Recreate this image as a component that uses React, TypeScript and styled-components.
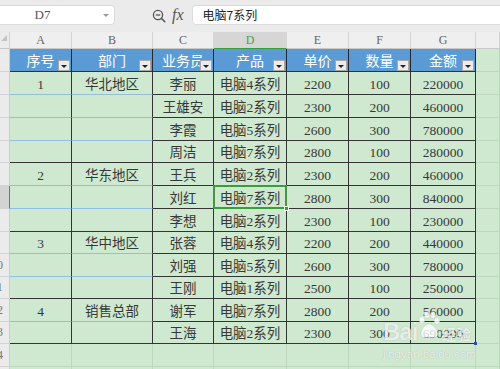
import React from "react";
import styled, { createGlobalStyle } from "styled-components";

const Global = createGlobalStyle`
  html, body { margin: 0; padding: 0; width: 500px; height: 369px; overflow: hidden; background: #cee9cf; }
  #root { width: 500px; height: 369px; overflow: hidden; }
`;

const GRID = "10px 62px 81px 61px 73px 62px 62px 65px 1fr";
const DARK = "#333333";
const LIGHT_BLUE = "#94bde3";
const LIGHT_GREEN = "#bcd8bc";
const GREEN_SEL = "#3c9b3c";
const CELL_BG = "#cee9cf";

const Page = styled.div`
  position: relative;
  width: 500px;
  height: 369px;
  overflow: hidden;
  background: ${CELL_BG};
  font-family: "Liberation Serif", "Noto Sans CJK SC", serif;
`;

const TopBar = styled.div`
  height: 32px;
  box-sizing: border-box;
  padding-top: 5px;
  background: #ebebeb;
  display: flex;
  align-items: flex-start;
`;

const NameBox = styled.div`
  position: relative;
  margin-left: -10px;
  width: 125px;
  height: 20px;
  box-sizing: border-box;
  padding-right: 20px;
  background: #fff;
  border: 1px solid #dcdcdc;
  border-radius: 4px;
  display: flex;
  align-items: center;
`;

const NameText = styled.span`
  flex: 1;
  text-align: center;
  font: 13px "Liberation Serif", serif;
  color: #555;
`;

const NameArrow = styled.span`
  position: absolute;
  right: 5px;
  top: 8px;
  border-left: 3px solid transparent;
  border-right: 3px solid transparent;
  border-top: 3px solid #999;
`;

const ZoomIcon = styled.svg`
  margin-left: 37px;
  margin-top: 4px;
  flex: none;
`;

const Fx = styled.span`
  margin-left: 6px;
  font: italic 16px "Liberation Serif", serif;
  line-height: 20px;
  color: #555;
`;

const FormulaBox = styled.div`
  flex: 1;
  margin-left: 8px;
  margin-right: -10px;
  height: 20px;
  box-sizing: border-box;
  padding-left: 10px;
  background: #fff;
  border: 1px solid #dcdcdc;
  border-radius: 4px;
  font: 12px "Noto Sans CJK SC", sans-serif;
  line-height: 18px;
  color: #222;
`;

const Row = styled.div<{ $h: number }>`
  display: grid;
  grid-template-columns: ${GRID};
  height: ${(p) => p.$h}px;
`;

const Corner = styled.div`
  position: relative;
  background: #ececec;
  border-right: 1px solid #d0d0d0;
  border-bottom: 1px solid #c8c8c8;
  overflow: hidden;
  &::after {
    content: "";
    position: absolute;
    left: 1px;
    top: 3px;
    border-left: 6px solid transparent;
    border-bottom: 6px solid #c4c4c4;
  }
`;

const ColHead = styled.div<{ $active?: boolean }>`
  box-sizing: border-box;
  background: ${(p) => (p.$active ? "#d6d6d6" : "#efefef")};
  border-right: 1px solid #d4d4d4;
  border-bottom: 1px solid ${(p) => (p.$active ? GREEN_SEL : "#c8c8c8")};
  color: ${(p) => (p.$active ? "#4ea04e" : "#666")};
  font: 12px "Liberation Serif", serif;
  display: flex;
  align-items: center;
  justify-content: center;
`;

const RowHead = styled.div<{ $sel?: boolean }>`
  box-sizing: border-box;
  background: ${(p) => (p.$sel ? "#d3d3d3" : "#ebebeb")};
  border-right: 1px solid ${(p) => (p.$sel ? GREEN_SEL : "#cccccc")};
  border-bottom: 1px solid #d2d2d2;
  display: flex;
  align-items: center;
  overflow: hidden;
`;

/* the row-number column is scrolled: only its right-most pixels are on screen */
const RowNum = styled.span`
  flex: none;
  width: 30px;
  margin-left: -18px;
  text-align: center;
  color: #777;
  font: 12px "Liberation Serif", serif;
  white-space: nowrap;
`;

const HeadCell = styled.div`
  position: relative;
  box-sizing: border-box;
  background: #5b9bd5;
  border-right: 1px solid #1f2a36;
  border-bottom: 1px solid ${DARK};
  color: #fff;
  font-size: 14px;
  line-height: 18px;
  display: flex;
  align-items: flex-end;
  justify-content: center;
  white-space: nowrap;
`;

const FilterBtn = styled.span`
  position: absolute;
  right: 1px;
  bottom: 0;
  width: 12px;
  height: 11px;
  box-sizing: border-box;
  background: #ececec;
  border: 1px solid #a8a8a8;
  z-index: 1;
  &::after {
    content: "";
    position: absolute;
    left: 2px;
    top: 4px;
    border-left: 3px solid transparent;
    border-right: 3px solid transparent;
    border-top: 3px solid #222;
  }
`;

const DataCell = styled.div<{ $bottom: "dark" | "light"; $active?: boolean }>`
  position: relative;
  box-sizing: border-box;
  background: ${CELL_BG};
  border-right: 1px solid ${DARK};
  border-bottom: 1px solid ${(p) => (p.$bottom === "dark" ? DARK : LIGHT_BLUE)};
  color: #383838;
  font-size: 13.5px;
  line-height: 18px;
  display: flex;
  align-items: flex-end;
  justify-content: center;
  white-space: nowrap;
  ${(p) =>
    p.$active
      ? `
    &::after {
      content: "";
      position: absolute;
      left: -1px; top: -1px; right: -1px; bottom: -1px;
      border: 2px solid ${GREEN_SEL};
      z-index: 2;
    }
    &::before {
      content: "";
      position: absolute;
      right: -3px; bottom: -3px;
      width: 5px; height: 5px;
      background: ${GREEN_SEL};
      border: 1px solid #fff;
      box-sizing: border-box;
      z-index: 3;
    }
  `
      : ""}
`;

const EmptyCell = styled.div`
  box-sizing: border-box;
  background: ${CELL_BG};
  border-right: 1px solid ${LIGHT_GREEN};
  border-bottom: 1px solid ${LIGHT_GREEN};
`;

const TableCorner = styled.span`
  position: absolute;
  left: 474px;
  top: 342px;
  width: 3px;
  height: 3px;
  background: #2f4f9f;
  z-index: 4;
`;

const Watermark = styled.div`
  position: absolute;
  left: 383px;
  top: 313px;
  z-index: 5;
  display: flex;
  flex-direction: column;
  align-items: flex-start;
  color: rgba(255, 255, 255, 0.78);
  text-shadow: 0 0 1px rgba(0, 0, 0, 0.25);
  pointer-events: none;
`;

const MarkLine = styled.div`
  display: flex;
  align-items: flex-end;
  height: 32px;
`;

const MarkBai = styled.span`
  font: bold 24px "Liberation Sans", sans-serif;
  line-height: 26px;
  letter-spacing: -1px;
`;

const MarkJy = styled.span`
  font: bold 15px "Noto Sans CJK SC", sans-serif;
  line-height: 22px;
  margin-left: 1px;
`;

const MarkUrl = styled.span`
  font: 11.5px "Liberation Sans", sans-serif;
  line-height: 14px;
  margin-top: 2px;
`;

const Paw = () => (
  <svg width="22" height="30" viewBox="0 0 22 30" style={{ marginLeft: 1, marginBottom: 4 }}>
    <g fill="rgba(255,255,255,0.8)" stroke="rgba(0,0,0,0.15)" strokeWidth="0.5">
      <ellipse cx="4" cy="9" rx="2.8" ry="3.4" />
      <ellipse cx="9" cy="4" rx="2.6" ry="3.2" />
      <ellipse cx="15" cy="4" rx="2.6" ry="3.2" />
      <ellipse cx="19" cy="10" rx="2.8" ry="3.2" />
      <path d="M11 13 C7 13 3 19 3 23 C3 27 7 27 11 26 C15 27 20 27 20 23 C20 19 15 13 11 13 Z" />
    </g>
  </svg>
);

type Rec = { no?: string; dept?: string; name: string; prod: string; price: string; qty: string; amt: string; end: boolean };

const data: Rec[] = [
  { no: "1", dept: "华北地区", name: "李丽", prod: "电脑4系列", price: "2200", qty: "100", amt: "220000", end: false },
  { name: "王雄安", prod: "电脑2系列", price: "2300", qty: "200", amt: "460000", end: false },
  { name: "李霞", prod: "电脑5系列", price: "2600", qty: "300", amt: "780000", end: false },
  { name: "周洁", prod: "电脑7系列", price: "2800", qty: "100", amt: "280000", end: true },
  { no: "2", dept: "华东地区", name: "王兵", prod: "电脑2系列", price: "2300", qty: "200", amt: "460000", end: false },
  { name: "刘红", prod: "电脑7系列", price: "2800", qty: "300", amt: "840000", end: false },
  { name: "李想", prod: "电脑2系列", price: "2300", qty: "100", amt: "230000", end: true },
  { no: "3", dept: "华中地区", name: "张蓉", prod: "电脑4系列", price: "2200", qty: "200", amt: "440000", end: false },
  { name: "刘强", prod: "电脑5系列", price: "2600", qty: "300", amt: "780000", end: false },
  { name: "王刚", prod: "电脑1系列", price: "2500", qty: "100", amt: "250000", end: true },
  { no: "4", dept: "销售总部", name: "谢军", prod: "电脑7系列", price: "2800", qty: "200", amt: "560000", end: false },
  { name: "王海", prod: "电脑2系列", price: "2300", qty: "300", amt: "690000", end: true },
];

const heights = [23, 23, 23, 22, 23, 23, 23, 22, 23, 22, 23, 22];
const letters = ["A", "B", "C", "D", "E", "F", "G"];
const heads = ["序号", "部门", "业务员", "产品", "单价", "数量", "金额"];

export default function App() {
  return (
    <Page>
      <Global />
      <TopBar>
        <NameBox>
          <NameText>D7</NameText>
          <NameArrow />
        </NameBox>
        <ZoomIcon width="14" height="14" viewBox="0 0 14 14">
          <circle cx="6" cy="6" r="4.6" fill="none" stroke="#555" strokeWidth="1.3" />
          <line x1="3.8" y1="6" x2="8.2" y2="6" stroke="#555" strokeWidth="1.3" />
          <line x1="9.4" y1="9.4" x2="12.8" y2="12.8" stroke="#555" strokeWidth="1.5" strokeLinecap="round" />
        </ZoomIcon>
        <Fx>fx</Fx>
        <FormulaBox>电脑7系列</FormulaBox>
      </TopBar>

      <Row $h={17}>
        <Corner />
        {letters.map((l) => (
          <ColHead key={l} $active={l === "D"}>
            {l}
          </ColHead>
        ))}
        <ColHead />
      </Row>

      <Row $h={23}>
        <RowHead>
          <RowNum>1</RowNum>
        </RowHead>
        {heads.map((h) => (
          <HeadCell key={h}>
            {h}
            <FilterBtn />
          </HeadCell>
        ))}
        <EmptyCell />
      </Row>

      {data.map((r, i) => {
        const rowNo = i + 2;
        const groupBottom = r.end ? "dark" : "light";
        return (
          <Row key={i} $h={heights[i]}>
            <RowHead $sel={rowNo === 7}>
              <RowNum>{rowNo}</RowNum>
            </RowHead>
            <DataCell $bottom={groupBottom}>{r.no}</DataCell>
            <DataCell $bottom={groupBottom}>{r.dept}</DataCell>
            <DataCell $bottom="dark">{r.name}</DataCell>
            <DataCell $bottom="dark" $active={rowNo === 7}>
              {r.prod}
            </DataCell>
            <DataCell $bottom="dark">{r.price}</DataCell>
            <DataCell $bottom="dark">{r.qty}</DataCell>
            <DataCell $bottom="dark">{r.amt}</DataCell>
            <EmptyCell />
          </Row>
        );
      })}

      {[14, 15].map((n) => (
        <Row key={n} $h={23}>
          <RowHead>
            <RowNum>{n}</RowNum>
          </RowHead>
          {letters.map((l) => (
            <EmptyCell key={l} />
          ))}
          <EmptyCell />
        </Row>
      ))}

      <TableCorner />
      <Watermark>
        <MarkLine>
          <MarkBai>Bai</MarkBai>
          <Paw />
          <MarkJy>经验</MarkJy>
        </MarkLine>
        <MarkUrl>jingyan.baidu.com</MarkUrl>
      </Watermark>
    </Page>
  );
}
